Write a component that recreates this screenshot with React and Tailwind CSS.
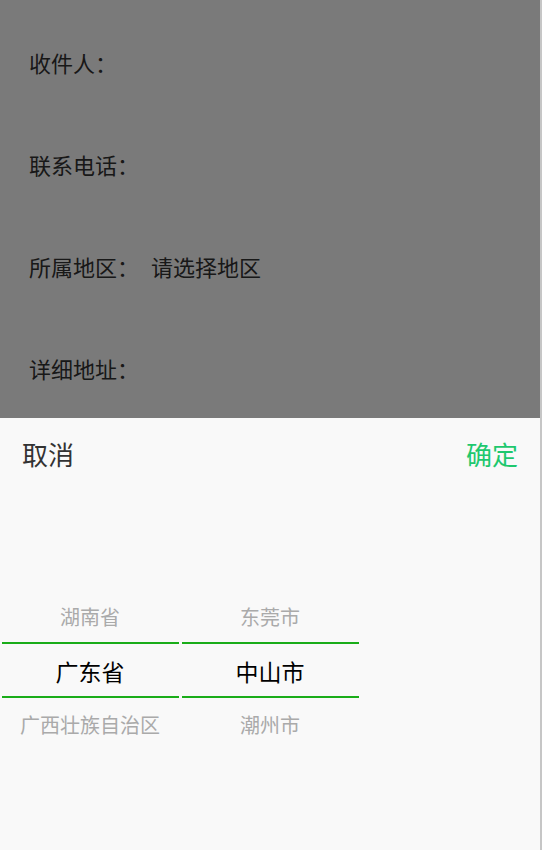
import React from "react";

const fields = [
  { label: "收件人：", value: "" },
  { label: "联系电话：", value: "" },
  { label: "所属地区：", value: "请选择地区" },
  { label: "详细地址：", value: "" },
];

const columns = [
  ["湖南省", "广东省", "广西壮族自治区"],
  ["东莞市", "中山市", "潮州市"],
  [],
];

function PickerColumn({ items }) {
  return (
    <div className="relative flex-1 h-full">
      <div className="flex flex-col pt-[98px]">
        {items.map((item, i) => (
          <div
            key={item}
            className={`h-[54px] flex items-center justify-center ${
              i === 1 ? "text-[23px] text-black" : "text-[20px] text-[#aaaaaa]"
            }`}
          >
            {item}
          </div>
        ))}
      </div>
      {items.length > 0 && (
        <div className="absolute left-[2px] right-[1px] top-[150px] h-[56px] border-y-2 border-[#1aad19]" />
      )}
    </div>
  );
}

export default function App() {
  return (
    <div
      className="relative w-[542px] h-[850px] flex bg-white overflow-hidden"
      style={{ fontFamily: '"Noto Sans CJK SC", "Noto Sans", sans-serif' }}
    >
      <div className="w-[540px] h-full flex flex-col">
        <div className="relative h-[418px]">
          <div className="pt-[11px]">
            {fields.map((f) => (
              <div key={f.label} className="h-[102px] flex items-center pl-[29px] text-[22px] text-[#333]">
                <span>{f.label}</span>
                {f.value && <span className="ml-[12px]">{f.value}</span>}
              </div>
            ))}
          </div>
          <div className="absolute inset-0 bg-black/[0.52]" />
        </div>
        <div className="flex-1 flex flex-col bg-[#f9f9f9]">
          <div className="h-[74px] flex items-center justify-between px-[22px] pb-[4px] text-[26px]">
            <span className="text-[#333]">取消</span>
            <span className="text-[#1ec86e]">确定</span>
          </div>
          <div className="flex-1 flex">
            {columns.map((items, i) => (
              <PickerColumn key={i} items={items} />
            ))}
          </div>
        </div>
      </div>
      <div className="w-[2px] h-full bg-[#c6c6c6]" />
    </div>
  );
}
